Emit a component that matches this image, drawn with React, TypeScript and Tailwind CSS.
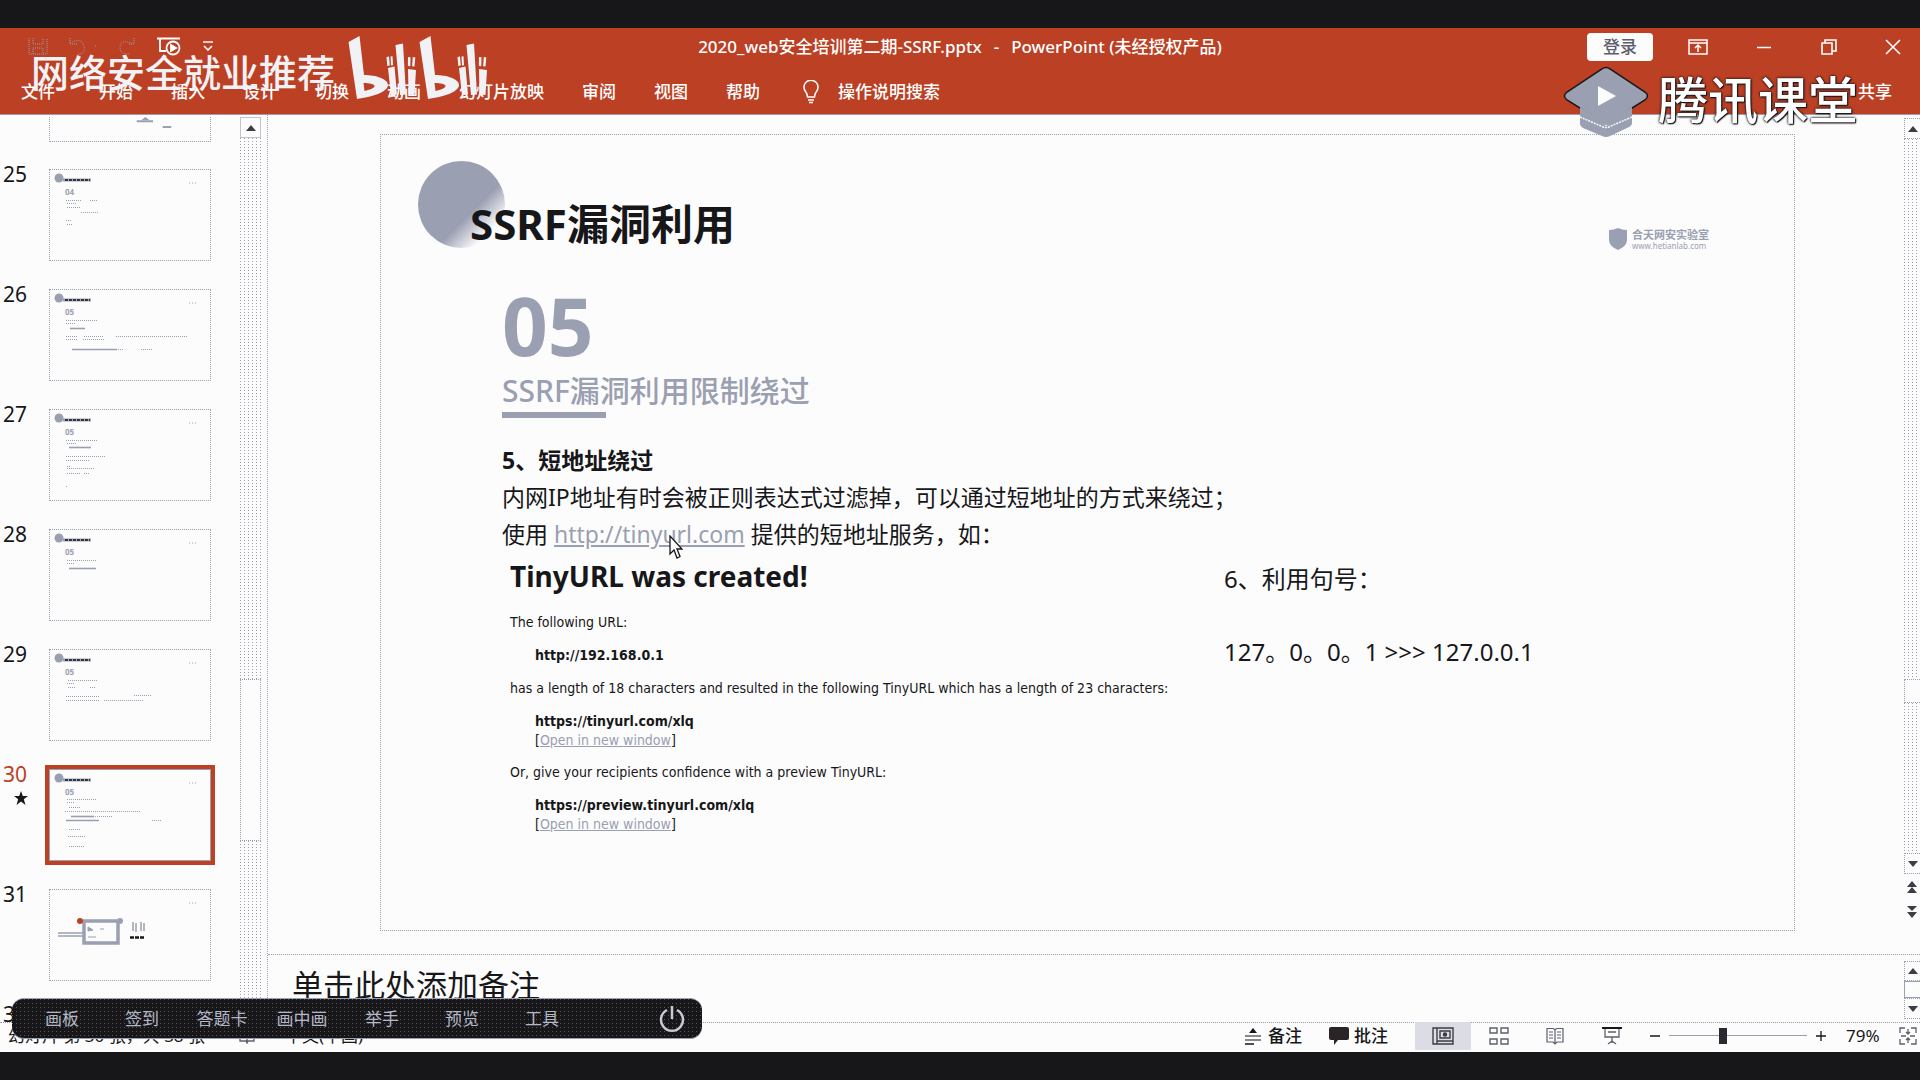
import React from "react";

const SANS = "font-['Noto_Sans','Noto_Sans_CJK_SC',sans-serif]";
const DOTS = "bg-[radial-gradient(circle_at_0_0,#9a9fb2_1px,transparent_1px)] bg-[length:4px_3px]";

type Mark = [x: number, y: number, w: number, solid?: boolean];

const slides: { id: number; label?: string; marks: Mark[] }[] = [
  { id: 25, label: "04", marks: [[16, 31, 16], [40, 31, 8], [17, 34, 10], [17, 38, 13], [31, 43, 18], [16, 51, 6], [17, 55, 6]] },
  { id: 26, label: "05", marks: [[16, 31, 32], [16, 34, 10], [20, 39, 15, true], [16, 47, 12], [34, 47, 20], [66, 47, 72], [16, 50, 12], [33, 50, 21], [22, 60, 45, true], [68, 60, 6], [91, 60, 11]] },
  { id: 27, label: "05", marks: [[16, 31, 32], [17, 34, 9], [19, 38, 22, true], [16, 47, 40], [16, 51, 23], [17, 57, 4], [17, 59, 28], [17, 64, 14], [34, 64, 6], [16, 77, 2]] },
  { id: 28, label: "05", marks: [[17, 31, 29], [17, 34, 8], [19, 39, 27, true]] },
  { id: 29, label: "05", marks: [[18, 31, 29], [17, 34, 7], [18, 38, 7], [40, 38, 6], [16, 47, 33], [84, 46, 17], [16, 51, 33], [54, 51, 40]] },
  { id: 30, label: "05", marks: [[17, 30, 29], [17, 33, 8], [19, 38, 11], [15, 42, 76], [21, 47, 23, true], [45, 47, 18], [16, 51, 33, true], [102, 51, 9], [19, 60, 12], [18, 67, 18], [19, 77, 16]] },
  { id: 31, marks: [] },
  { id: 32, marks: [] },
];

const tabs = ["开始", "插入", "设计", "切换", "动画", "幻灯片放映", "审阅", "视图", "帮助"];
const tools = ["画板", "签到", "答题卡", "画中画", "举手", "预览", "工具"];

function ThumbArt({ label, marks, id }: { label?: string; marks: Mark[]; id: number }) {
  return (
    <svg viewBox="0 0 160 90" className="block h-[90px] w-[160px]" aria-hidden="true">
      <path d="M139 13h9" stroke="#9a9fb2" strokeDasharray="1 2" />
      {label && (
        <>
          <circle cx="9" cy="8" r="4.5" fill="#9a9fb2" />
          <path d="M13 10h28" stroke="#9a9fb2" strokeWidth="3" />
          <path d="M15 10h25" stroke="#17171a" strokeWidth="1.4" strokeDasharray="3 1" />
          <text x="15" y="25" fontSize="8" fontWeight="700" fill="#9a9fb2" fontFamily="Noto Sans, sans-serif">{label}</text>
        </>
      )}
      {marks.map(([x, y, w, solid], i) => (
        <path key={i} d={`M${x} ${y - 0.5}h${w}`} stroke="#9a9fb2" strokeWidth={solid ? 1.6 : 1} strokeDasharray={solid ? undefined : "1 1"} />
      ))}
      {id === 31 && (
        <>
          <path d="M8 43h25M8 46h25" stroke="#9a9fb2" strokeWidth="1.5" />
          <rect x="34" y="31" width="34" height="22" fill="none" stroke="#9a9fb2" strokeWidth="3.5" />
          <path d="M38 41v-4l5 3zM50 39h4M38 47h8" stroke="#9a9fb2" fill="#9a9fb2" />
          <circle cx="30" cy="31" r="3" fill="#bc4024" />
          <circle cx="70" cy="31" r="3" fill="#9a9fb2" />
          <path d="M83 32v9M86 33v9M91 32v9M94 33v8" stroke="#9a9fb2" strokeWidth="1.5" />
          <path d="M80 47.5h15" stroke="#17171a" strokeWidth="2.5" strokeDasharray="4 1" />
        </>
      )}
    </svg>
  );
}

function Arrow({ down }: { down?: boolean }) {
  return (
    <svg viewBox="0 0 10 6" className="h-[6px] w-[10px]" aria-hidden="true">
      <path d={down ? "M0 0h10L5 6z" : "M0 6h10L5 0z"} fill="#3c3d46" />
    </svg>
  );
}

function DoubleArrow({ down }: { down?: boolean }) {
  return (
    <svg viewBox="0 0 10 12" className="h-[12px] w-[10px]" aria-hidden="true">
      <path d={down ? "M0 0h10L5 5zM0 6h10l-5 6z" : "M0 6h10L5 0zM0 12h10L5 6z"} fill="#3c3d46" />
    </svg>
  );
}

function BiliLogo() {
  const half = (
    <>
      <path fillRule="evenodd" d="M.5 6 11.500 0l4.500 39c12 0 24 4 24 10 0 7-16 12-31 14zM15.500 47l1 8c5-1 10-3 10-5s-5-3-11-3z" />
      <path d="m38.500 21 2.500-.5.800 9-2.500.5zM42.500 20.500l2-.2.500 9-2 .3zM40 32l6.500-1.500 2.500 28-6 .8zM47.500 9l7.500-1.500 3 51-6 .5zM60 21l2.500.2-.2 9-2.400-.2zM64.800 21l2.500.5-.8 9-2.400-.3zM60 33l8 1-1.500 25-6-.5z" />
    </>
  );
  return (
    <svg viewBox="0 0 142 64" className="h-[64px] w-[142px]" fill="#f1f2f6" role="img" aria-label="bilibili">
      <g>{half}</g>
      <g transform="translate(71 0)">{half}</g>
    </svg>
  );
}

function ClassroomLogo() {
  return (
    <svg viewBox="0 0 86 72" className="h-[72px] w-[86px]" aria-hidden="true">
      <path d="M17 44v14q0 2 3 4l19 8q4 2 8 0l17-8q5-2 5-5V44L43 60z" fill="#9a9fb2" />
      <path d="m17 51 21 9q5 3 10 0l21-9" stroke="#fcfcfc" strokeWidth="1.500" strokeDasharray="2 1" fill="none" />
      <path d="M39 3q4-3 8 0l35 23q5 4 0 8L50 54q-7 4-14 0L4 34q-5-4 0-8z" fill="#9a9fb2" stroke="#17171a" strokeWidth="1.500" />
      <path d="M17 49v-8l20 11q6 3 12 0l20-11v8l-21 9q-5 2-10 0z" fill="#9a9fb2" />
      <path d="M35 20v20l18-10z" fill="#fcfcfc" />
    </svg>
  );
}

function Header() {
  return (
    <header className="relative h-[87px] shrink-0 border-b border-[#9a9fb2] bg-[#bc4024] text-[17px] font-medium text-white">
      <div className="grid h-[37px] grid-cols-[1fr_auto_1fr] items-center">
        <div className="flex items-start gap-[21px] pl-[28px]">
          <button aria-label="保存" className="text-[#9a9fb2]">
            <svg viewBox="0 0 20 18" className="h-[18px] w-[20px]" fill="none" stroke="currentColor" strokeDasharray="1 1"><path d="M1 1v16h18V1M5 1v6h10V1M5 17v-6h10v6" /></svg>
          </button>
          <button aria-label="撤消" className="text-[#9a9fb2]">
            <svg viewBox="0 0 28 18" className="h-[18px] w-[28px]" fill="none" stroke="currentColor" strokeDasharray="1 1"><path d="M1 1v6h7M1 6q12-6 14 3t-7 8M26 9h2" /></svg>
          </button>
          <button aria-label="恢复" className="text-[#9a9fb2]">
            <svg viewBox="0 0 18 18" className="h-[18px] w-[18px]" fill="none" stroke="currentColor" strokeDasharray="1 1"><path d="M16 1v6h-6M14 6Q2 2 2 10t10 7" /></svg>
          </button>
          <button aria-label="从头开始">
            <svg viewBox="0 0 24 20" className="h-[20px] w-[24px]" fill="none" stroke="white" strokeWidth="1.800"><path d="M0 1.500h23M3 2v12h6" /><circle cx="16" cy="11" r="6.500" /><path d="m14 8 5 3-5 3z" fill="white" /></svg>
          </button>
          <button aria-label="自定义快速访问工具栏" className="pt-1">
            <svg viewBox="0 0 12 10" className="h-[10px] w-[12px]" fill="none" stroke="white" strokeWidth="1.500"><path d="M1 1h10M2 5l4 4 4-4" /></svg>
          </button>
        </div>
        <h1 className="flex gap-3"><span>2020_web安全培训第二期-SSRF.pptx</span><span>-</span><span>PowerPoint (未经授权产品)</span></h1>
        <div className="flex items-center justify-end pr-[19px]">
          <button className="mr-[35px] h-[28px] w-[66px] rounded-sm bg-[#fcfcfc] leading-7 text-[#5c5f6e]">登录</button>
          <button aria-label="功能区显示选项" className="mr-[48px]">
            <svg viewBox="0 0 20 16" className="h-[16px] w-[20px]" fill="none" stroke="white" strokeWidth="1.500"><path d="M1 1h18v14H1zM1 4h18M10 13V7M7 9l3-3 3 3" /></svg>
          </button>
          <button aria-label="最小化" className="mr-[49px]">
            <svg viewBox="0 0 16 16" className="size-4" stroke="white" strokeWidth="1.500"><path d="M1 8.500h14" /></svg>
          </button>
          <button aria-label="还原" className="mr-[48px]">
            <svg viewBox="0 0 16 16" className="size-4" fill="none" stroke="white" strokeWidth="1.600"><path d="M1 4h10v11H1zM4 4V1h11v11h-4" /></svg>
          </button>
          <button aria-label="关闭">
            <svg viewBox="0 0 16 16" className="size-4" stroke="white" strokeWidth="1.600"><path d="m1 1 14 14M15 1 1 15" /></svg>
          </button>
        </div>
      </div>
      <nav className="mt-1 flex h-[46px] items-center pr-[28px] pl-[21px]">
        <button className="mr-[44px]">文件</button>
        <div className="flex gap-[38px]">
          {tabs.map((t) => <button key={t}>{t}</button>)}
        </div>
        <button className="ml-[42px] flex items-center gap-[18px]">
          <svg viewBox="0 0 18 24" className="h-[24px] w-[18px]" fill="none" stroke="white" strokeWidth="1.500"><path d="M5.500 17q0-3-2-5.500a7 7 0 1 1 11 0q-2 2.500-2 5.500zM6 20h6M7 22.500h4" /></svg>
          <span>操作说明搜索</span>
        </button>
        <button className="ml-auto">共享</button>
      </nav>
    </header>
  );
}

function SlideRail() {
  return (
    <aside className="flex w-[268px] shrink-0 border-r border-dotted border-[#9a9fb2] pt-[2px]">
      <ol className="h-full min-w-0 flex-1 overflow-hidden">
        <li className="h-[45px] pl-[49px]">
          <svg viewBox="0 0 162 25" className="h-[25px] w-[162px] border border-t-0 border-dotted border-[#9a9fb2]" aria-hidden="true">
            <path d="M88 4.500h17M115 10.500h9" stroke="#9a9fb2" strokeWidth="2" /><path d="m93 3 4-3 4 3z" fill="#9a9fb2" />
          </svg>
        </li>
        {slides.map((s) => {
          const active = s.id === 30;
          return (
            <li key={s.id} className="flex h-[120px] items-start">
              <div className="w-[49px] shrink-0 pl-[3px]">
                <div className={active ? "text-[21px] leading-6 text-[#bc4024]" : "text-[21px] leading-6 text-[#17171a]"}>{s.id}</div>
                {active && (
                  <svg viewBox="0 0 14 14" className="mt-[5px] ml-[11px] size-[14px]" fill="#17171a" aria-hidden="true"><path d="m7 0 1.800 5H14l-4.200 3.200L11.500 14 7 10.500 2.500 14l1.700-5.800L0 5h5.200z" /></svg>
                )}
              </div>
              <button
                aria-label={`幻灯片 ${s.id}`}
                className={
                  active
                    ? "mt-[7px] border border-[#9a9fb2] outline-4 outline-[#bc4024]"
                    : "mt-[7px] border border-dotted border-[#9a9fb2]"
                }
              >
                <ThumbArt {...s} />
              </button>
            </li>
          );
        })}
      </ol>
      <div className="mr-[6px] flex w-[21px] flex-col">
        <button aria-label="向上滚动" className="flex h-[21px] items-center justify-center border border-[#9a9fb2]/60"><Arrow /></button>
        <div className={`flex-[540] ${DOTS}`} />
        <div className="h-[162px] border border-dotted border-[#9a9fb2]" />
        <div className={`flex-[160] ${DOTS}`} />
        <button aria-label="向下滚动" className="flex h-[21px] items-center justify-center border border-[#9a9fb2]/60"><Arrow down /></button>
      </div>
    </aside>
  );
}

function Slide() {
  return (
    <article className="relative mr-[109px] ml-[112px] mt-[19px] h-[797px] flex-1 border border-dotted border-[#9a9fb2] pl-[121px]">
      <div className="absolute top-[26px] left-[37px] size-[87px] rounded-full bg-[linear-gradient(135deg,#9a9fb2_60%,#fcfcfc_82%)]" />
      <div className="absolute top-[93px] right-[85px] flex items-center gap-[5px] text-[#9a9fb2]">
        <svg viewBox="0 0 18 22" className="h-[22px] w-[18px]" fill="currentColor" aria-hidden="true"><path d="M0 2q5 0 9-2 4 2 9 2v10q0 6-9 10-9-4-9-10z" /></svg>
        <div>
          <div className="text-[11px] leading-[13px] font-bold">合天网安实验室</div>
          <div className="text-[8px] leading-[9px]">www.hetianlab.com</div>
        </div>
      </div>
      <h2 className="relative -ml-[32px] pt-[59px] text-[42px] leading-[60px] font-bold">SSRF漏洞利用</h2>
      <div className="mt-[28px] text-[80px] leading-[86px] font-bold text-[#9a9fb2]">05</div>
      <div className="mt-[2px] text-[30px] leading-[42px] font-medium text-[#9a9fb2]">SSRF漏洞利用限制绕过</div>
      <div className="h-[6px] w-[104px] bg-[#9a9fb2]" />
      <div className="mt-[24px] text-[23px] leading-[37px]">
        <p className="font-bold">5、短地址绕过</p>
        <p>内网IP地址有时会被正则表达式过滤掉，可以通过短地址的方式来绕过；</p>
        <p>使用 <a href="#tinyurl" className="text-[#9a9fb2] underline">http://tinyurl.com</a> 提供的短地址服务，如：</p>
      </div>
      <div className="flex">
        <div className="w-[722px] pl-[8px] font-['DejaVu_Sans_Condensed','DejaVu_Sans',sans-serif] text-[14px] leading-[19px]">
          <h3 className="font-['Noto_Sans',sans-serif] text-[28px] leading-[46px] font-bold">TinyURL was created!</h3>
          <p className="mt-[14px]">The following URL:</p>
          <p className="mt-[14px] pl-[25px] font-bold">http://192.168.0.1</p>
          <p className="mt-[14px] whitespace-nowrap">has a length of 18 characters and resulted in the following TinyURL which has a length of 23 characters:</p>
          <p className="mt-[14px] pl-[25px] font-bold">https://tinyurl.com/xlq</p>
          <p className="pl-[25px]">[<a href="#open" className="text-[#9a9fb2] underline">Open in new window</a>]</p>
          <p className="mt-[13px]">Or, give your recipients confidence with a preview TinyURL:</p>
          <p className="mt-[14px] pl-[25px] font-bold">https://preview.tinyurl.com/xlq</p>
          <p className="pl-[25px]">[<a href="#preview" className="text-[#9a9fb2] underline">Open in new window</a>]</p>
        </div>
        <div className="pt-[8px] text-[24px] leading-[36px]">
          <p>6、利用句号：</p>
          <p className="mt-[37px]">127。0。0。1 &gt;&gt;&gt; 127.0.0.1</p>
        </div>
      </div>
      <svg viewBox="0 0 14 24" className="absolute top-[400px] left-[288px] h-[24px] w-[14px]" fill="#fcfcfc" stroke="#17171a" strokeWidth="1.300" aria-hidden="true">
        <path d="M1 1v18l4-4 3 8 3-1.500L8 14h5z" />
      </svg>
    </article>
  );
}

function Editor() {
  return (
    <main className="flex min-w-0 flex-1 flex-col">
      <section className="flex flex-1">
        <Slide />
        <div className="flex w-[16px] flex-col overflow-hidden pt-[3px]">
          <button aria-label="上一行" className="flex h-[21px] items-center justify-center border border-r-0 border-dotted border-[#9a9fb2]"><Arrow /></button>
          <div className={`flex-[540] ${DOTS}`} />
          <div className="h-[24px] border border-r-0 border-dotted border-[#9a9fb2]" />
          <div className={`flex-[150] ${DOTS}`} />
          <button aria-label="下一行" className="flex h-[21px] items-center justify-center border border-r-0 border-dotted border-[#9a9fb2]"><Arrow down /></button>
          <button aria-label="上一张幻灯片" className="flex h-[25px] items-center justify-center"><DoubleArrow /></button>
          <button aria-label="下一张幻灯片" className="mb-[30px] flex h-[25px] items-center justify-center"><DoubleArrow down /></button>
        </div>
      </section>
      <section className="flex h-[68px] border-t border-dotted border-[#9a9fb2]">
        <p className="flex-1 pl-[24px] text-[31px] leading-[61px]">单击此处添加备注</p>
        <div className="flex w-[16px] flex-col pt-[6px]">
          <button aria-label="备注向上滚动" className="flex h-[20px] items-center justify-center border border-r-0 border-dotted border-[#9a9fb2]"><Arrow /></button>
          <div className="h-[17px] border border-r-0 border-[#9a9fb2]" />
          <button aria-label="备注向下滚动" className="flex h-[21px] items-center justify-center border border-r-0 border-dotted border-[#9a9fb2]"><Arrow down /></button>
        </div>
      </section>
    </main>
  );
}

function StatusBar() {
  return (
    <footer className="flex h-[30px] shrink-0 items-center border-t border-dotted border-[#9a9fb2] pb-[4px] pl-[8px] text-[17px]">
      <span>幻灯片 第 30 张，共 38 张</span>
      <svg viewBox="0 0 16 16" className="ml-[34px] size-4" fill="none" stroke="#5c5f6e" strokeWidth="1.300" aria-hidden="true"><path d="M1 2h6l1 1 1-1h6v11H9l-1 2-1-2H1zM8 3v11" /></svg>
      <span className="ml-[30px]">中文(中国)</span>
      <div className="ml-auto flex items-center">
        <button className="flex items-center gap-[6px] font-medium">
          <svg viewBox="0 0 18 18" className="size-[18px]" aria-hidden="true"><path d="m9 1 4 5H5z" fill="#17171a" /><path d="M1 9h16M1 13h16" stroke="#5c5f6e" strokeWidth="1.500" /><path d="M1 17h9" stroke="#17171a" strokeWidth="1.500" /></svg>
          备注
        </button>
        <button className="ml-[27px] flex items-center gap-[5px] font-medium">
          <svg viewBox="0 0 20 18" className="h-[18px] w-[20px]" aria-hidden="true"><path d="M2 0h16q2 0 2 2v9q0 2-2 2H9l-4 5v-5H2q-2 0-2-2V2q0-2 2-2z" fill="#2a2426" /></svg>
          批注
        </button>
        <button aria-label="普通视图" className="ml-[27px] flex h-[28px] w-[56px] items-center justify-center bg-[#dcdde4]">
          <svg viewBox="0 0 22 18" className="h-[18px] w-[22px]" fill="none" stroke="#3c3d46" strokeWidth="1.400"><path d="M1 1h20v16H1zM5 1v16M8 4h10v7H8zM5 14h16" /><circle cx="13" cy="7.500" r="1.500" fill="#3c3d46" /></svg>
        </button>
        <button aria-label="幻灯片浏览" className="ml-[18px]">
          <svg viewBox="0 0 20 18" className="h-[18px] w-[20px]" fill="none" stroke="#5c5f6e" strokeWidth="1.400"><path d="M1 1h7v5H1zM12 1h7v5h-7zM1 12h7v5H1zM12 12h7v5h-7z" /></svg>
        </button>
        <button aria-label="阅读视图" className="ml-[37px]">
          <svg viewBox="0 0 18 18" className="size-[18px]" fill="none" stroke="#5c5f6e" strokeWidth="1.200"><path d="M1 1.500h6l2 1 2-1h6V15h-6l-2 2-2-2H1zM9 3v14M3 5h4M3 8h4M3 11h4M11 5h4M11 8h4M11 11h4" /></svg>
        </button>
        <button aria-label="幻灯片放映视图" className="ml-[38px]">
          <svg viewBox="0 0 20 18" className="h-[18px] w-[20px]" fill="none" stroke="#5c5f6e" strokeWidth="1.300"><path d="M0 1h20" stroke="#17171a" strokeWidth="2" /><path d="M3 2v8h14V2M6 5h8M10 10v6M6 17l4-3 4 3" /></svg>
        </button>
        <button aria-label="缩小" className="ml-[27px]">
          <svg viewBox="0 0 12 12" className="size-3" stroke="#17171a" strokeWidth="1.500"><path d="M1 6h10" /></svg>
        </button>
        <input
          type="range"
          aria-label="缩放"
          min={10}
          max={400}
          defaultValue={160}
          className="mx-[8px] h-4 w-[138px] appearance-none bg-[linear-gradient(#9a9fb2,#9a9fb2)] bg-[length:100%_1px] bg-center bg-no-repeat [&::-webkit-slider-thumb]:h-4 [&::-webkit-slider-thumb]:w-2 [&::-webkit-slider-thumb]:appearance-none [&::-webkit-slider-thumb]:bg-[#2a2a30]"
        />
        <button aria-label="放大">
          <svg viewBox="0 0 12 12" className="size-3" stroke="#17171a" strokeWidth="1.300"><path d="M1 6h10M6 1v10" /></svg>
        </button>
        <span className="ml-[19px] w-[36px] text-[17px]">79%</span>
        <button aria-label="使幻灯片适应当前窗口" className="mr-[3px] ml-[17px]">
          <svg viewBox="0 0 18 18" className="size-[18px]" fill="none" stroke="#5c5f6e" strokeWidth="1.300"><path d="M1 6V1h5M12 1h5v5M17 12v5h-5M6 17H1v-5M9 2v5M9 11v5M2 9h5M11 9h5M7 5l2 2 2-2M7 13l2-2 2 2" /></svg>
        </button>
      </div>
    </footer>
  );
}

function ClassToolbar() {
  return (
    <div className="absolute bottom-[41px] left-[12px] h-[41px] w-[690px] rounded-xl border-y border-[#9a9fb2] bg-[#17171a] text-[17px] text-[#b4b8c6]">
      <div className="flex h-full items-center rounded-xl bg-[radial-gradient(circle_at_0_0,#5c545c_1px,transparent_1px)] bg-[length:4px_4px] pl-[10px]">
        {tools.map((t) => <button key={t} className="w-20">{t}</button>)}
        <button aria-label="退出" className="mr-[17px] ml-auto">
          <svg viewBox="0 0 26 28" className="h-[28px] w-[26px]" fill="none" stroke="#c8cad4" strokeWidth="2.500"><path d="M13 1v13M8 5a11 11 0 1 0 10 0" /></svg>
        </button>
      </div>
    </div>
  );
}

export default function App() {
  return (
    <div className={`relative flex h-screen flex-col overflow-hidden bg-[#fcfcfc] text-[#17171a] ${SANS}`}>
      <div className="h-[28px] shrink-0 bg-[#17171a]" />
      <Header />
      <div className="flex min-h-0 flex-1">
        <SlideRail />
        <Editor />
      </div>
      <StatusBar />
      <div className="h-[28px] shrink-0 bg-[#17171a]" />
      <div className="pointer-events-none absolute top-[36px] left-[31px] flex items-start gap-[13px] text-[#f1f2f6]">
        <span className="pt-[11px] text-[38px] leading-[50px] font-medium">网络安全就业推荐</span>
        <BiliLogo />
      </div>
      <div className="pointer-events-none absolute top-[66px] right-[62px] flex items-start gap-[9px]">
        <ClassroomLogo />
        <span className="pt-[6px] text-[50px] leading-[56px] font-medium text-white [text-shadow:0_0_3px_#17171a,0_0_2px_#17171a,1px_1px_1px_#17171a]">腾讯课堂</span>
      </div>
      <ClassToolbar />
    </div>
  );
}
